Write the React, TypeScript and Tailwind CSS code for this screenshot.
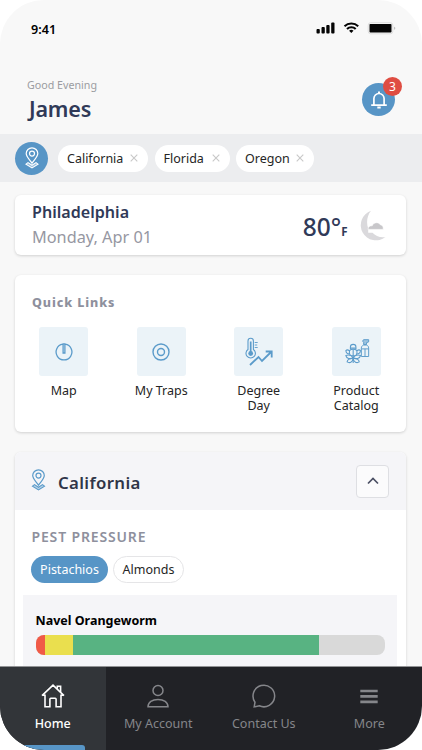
import type { ReactNode } from "react";

const locations = [
  { name: "California", width: "w-[90px]" },
  { name: "Florida", width: "w-[75px]" },
  { name: "Oregon", width: "w-[78px]" },
];

const pressure = [
  { color: "bg-[#f05a47]", value: 2.7 },
  { color: "bg-[#eadf4e]", value: 8.0 },
  { color: "bg-[#58b382]", value: 70.3 },
];

function PinIcon({ className }: { className: string }) {
  return (
    <svg viewBox="0 0 14 22" fill="none" stroke="currentColor" strokeWidth="1.200" className={className}>
      <path d="M7 16.2C4.600 12.600 1.200 9.700 1.200 6.600a5.800 5.800 0 0 1 11.600 0c0 3.100-3.400 6-5.800 9.600Z" />
      <circle cx="7" cy="6.600" r="2.500" />
      <path d="M3 15.600 1 17.100 7 20.900l6-3.800-2-1.500-4 2.700Z" fill="currentColor" fillOpacity=".4" strokeWidth="1.100" />
    </svg>
  );
}

function BellIcon() {
  return (
    <svg viewBox="0 0 18 18" fill="none" stroke="currentColor" strokeWidth="1.700" className="size-[18px]">
      <path d="M1.200 14.200h15.600M3.900 14V7.600a5.100 5.100 0 0 1 10.200 0V14" />
      <path d="M9 .5v2.300M7.300 16.500h3.400" strokeWidth="2" />
    </svg>
  );
}

function StatusIcons() {
  return (
    <svg viewBox="0 0 82 14" className="h-[14px] w-[82px]">
      <g fill="#050505">
        <rect x="0.500" y="8" width="3.300" height="4.500" rx="0.900" />
        <rect x="5.500" y="6" width="3.300" height="6.500" rx="0.900" />
        <rect x="10.300" y="4" width="3.300" height="8.500" rx="0.900" />
        <rect x="15.200" y="1.500" width="3.300" height="11" rx="0.900" />
        <rect x="53.500" y="3" width="22" height="8.500" rx="0.800" />
        <path d="m35.300 12-2.200-2.200a3.300 3.300 0 0 1 4.400 0Z" />
      </g>
      <g fill="none" stroke="#050505" strokeWidth="2.100">
        <path d="M28.500 5.200a10 10 0 0 1 13.700 0M31 8a6.200 6.200 0 0 1 8.700 0" />
      </g>
      <rect x="52.200" y="1.700" width="24.600" height="11.100" rx="2.500" fill="none" stroke="#dedede" />
      <path d="M78.300 5.700v3.100c1.300-.5 1.300-2.600 0-3.100" fill="#aaa" />
    </svg>
  );
}

function MoonIcon() {
  return (
    <svg viewBox="0 0 27 31" className="h-[31px] w-[27px]">
      <path d="M11 .8A15.200 15.200 0 1 0 25.500 27c-5.500.8-10-1-13-4.300H8.200v-4.200C6.200 13 6.800 6 11 .8Z" fill="#dad9dc" />
      <path
        d="M8 19.400c0-2.600 2-4 4.200-3.600 1.300-3.700 6.400-4.200 8.200-1 2 .2 3.200 2 2.800 4.600Z"
        fill="#c8c7ca"
        stroke="#fff"
        strokeWidth=".6"
      />
    </svg>
  );
}

function MapIcon() {
  return (
    <svg viewBox="0 0 18 18" fill="none" stroke="currentColor" strokeWidth="1.300" className="size-[18px]">
      <path d="M7.800 1.200a7.900 7.900 0 1 0 2.400 0M8.100 10V.8h1.800V10Z" />
    </svg>
  );
}

function TrapIcon() {
  return (
    <svg viewBox="0 0 18 18" fill="none" stroke="currentColor" strokeWidth="1.400" className="size-[18px]">
      <circle cx="9" cy="9" r="8" />
      <circle cx="9" cy="9" r="3.500" />
    </svg>
  );
}

function DegreeIcon() {
  return (
    <svg viewBox="0 0 28 29" fill="none" stroke="currentColor" className="h-[29px] w-[28px]">
      <path d="M3 12.500V4a2.700 2.700 0 0 1 5.400 0v8.500a4.700 4.700 0 1 1-5.400 0Z" strokeWidth="1.100" />
      <path d="M5.700 4.500v11" strokeWidth="1.700" />
      <circle cx="5.700" cy="16.500" r="2.400" fill="currentColor" stroke="none" />
      <path d="M9.700 5.500h3M9.700 8h2.500M9.700 10.500h3" strokeWidth=".9" />
      <path d="m5 28 8.500-8 3.500 4 9.600-9.500M20.700 14.500h6v6" strokeWidth="1.800" />
    </svg>
  );
}

function ProductIcon() {
  return (
    <svg viewBox="0 0 26 26" fill="none" stroke="currentColor" strokeWidth="1.100" className="ml-[2px] size-[25px]">
      <path d="M5.600 11V8.500a2.900 2.900 0 0 1 5.800 0V11M5.600 9.500h5.800M8.500 11v14" />
      <path d="M8.500 17.500c-2.800.3-4.700-1.400-3.800-5.500 2-1.700 5.600-1.700 7.600 0 .9 4.100-1 5.800-3.800 5.500Z" />
      <path d="M4.700 12.300C3.200 11.100 1.700 11.200.9 12c.1 2.200 1.600 3.600 4 3.600M12.300 12.300c1.500-1.200 3-1.100 3.800-.3-.1 2.200-1.600 3.600-4 3.600" />
      <path d="M8.500 19.500c-2-2.600-5.200-3.200-7.600-2.300.6 3 4.500 4.200 7.600 2.300ZM8.500 19.500c2-2.600 5.200-3.200 7.600-2.300-.6 3-4.500 4.200-7.600 2.300Z" />
      <path d="M8.500 20.500c-3.400-.8-6 .8-6.300 3.300 2.700 1.800 5.700.2 6.300-3.300ZM8.500 20.500c3.400-.8 6 .8 6.300 3.300-2.700 1.800-5.700.2-6.300-3.300Z" />
      <path d="M17 18.200V9.500c0-1.600 1-2.700 2.200-3.200h3.200c1.400.5 2.200 1.600 2.200 3.200v8.700ZM17 10.300h7.600M20.800 10.300v7.900" strokeWidth="1" />
      <path d="M19.400 5.700V3.400L18.300 2.200l1-1.500h5.300V3l-2.200.8v1.900Z" fill="currentColor" fillOpacity=".55" strokeWidth="1" />
    </svg>
  );
}

function HomeIcon() {
  return (
    <svg viewBox="0 0 24 24" fill="none" stroke="currentColor" strokeWidth="1.600" className="size-6">
      <path d="M1 11.600 12 1.200l11 10.400M1 11.300h3v11.500h4.900v-7.600c0-.6.300-.9.900-.9h4.400c.6 0 .9.300.9.900v7.600H20V11.300h3" />
      <path d="M16.300 4.800V2.200h3.300v5.900" />
    </svg>
  );
}

function UserIcon() {
  return (
    <svg viewBox="0 0 24 24" fill="none" stroke="currentColor" strokeWidth="1.500" className="size-6">
      <circle cx="12" cy="6.500" r="5" />
      <path d="M2 22.800c0-4.600 4.200-7.400 10-7.400s10 2.800 10 7.400Z" />
    </svg>
  );
}

function ChatIcon() {
  return (
    <svg viewBox="0 0 24 24" fill="none" stroke="currentColor" strokeWidth="1.500" className="size-6">
      <path d="M2.200 22.900 3 18.200a10.800 10.800 0 1 1 4.300 3.600Z" />
    </svg>
  );
}

function MenuIcon() {
  return (
    <svg viewBox="0 0 24 24" fill="none" stroke="currentColor" strokeWidth="2.700" className="size-6">
      <path d="M3.300 7h17.400M3.300 12.400h17.400M3.300 17.800h17.400" />
    </svg>
  );
}

function QuickLink({ icon, label }: { icon: ReactNode; label: ReactNode }) {
  return (
    <div className="flex flex-col items-center">
      <div className="flex size-[49px] items-center justify-center rounded-[3px] bg-[#ebf3f8] text-[#5b9bca]">
        {icon}
      </div>
      <p className="mt-[8px] text-center text-[12.500px] leading-[14.600px] text-[#252525]">{label}</p>
    </div>
  );
}

function NavItem({ icon, label, active = false }: { icon: ReactNode; label: string; active?: boolean }) {
  return (
    <div
      className={
        active
          ? "relative flex flex-col items-center bg-[#323539] pt-[17px] font-medium text-white"
          : "relative flex flex-col items-center pt-[17px] text-[#85868a]"
      }
    >
      {icon}
      <span className="mt-[7px] text-[12.500px] leading-[18px]">{label}</span>
      {active && <div className="absolute bottom-0 left-[21px] h-[5px] w-[64px] rounded-t-[3px] bg-[#5795c6]" />}
    </div>
  );
}

export default function App() {
  return (
    <div className="h-[750px] w-[422px] bg-white font-['Noto_Sans',sans-serif]">
      <div className="flex h-full flex-col overflow-hidden rounded-[44px] bg-[#f8f8f8]">
        <header className="h-[134px] shrink-0">
          <div className="flex h-[60px] items-center justify-between pr-[24px] pl-[31px]">
            <span className="pt-px text-[12.600px] font-semibold text-black">9:41</span>
            <div className="-mt-[5px]">
              <StatusIcons />
            </div>
          </div>
          <div className="flex justify-between pr-[27px] pl-[27px]">
            <div className="pt-[17px]">
              <p className="text-[10.700px] leading-[16px] text-[#9b9ca1]">Good Evening</p>
              <h1 className="mt-[2px] pl-[2px] text-[21.500px] leading-[28px] font-semibold tracking-[-0.2px] text-[#303a58]">
                James
              </h1>
            </div>
            <div className="relative mt-[23px] flex size-[33px] items-center justify-center rounded-full bg-[#5795c6] text-white">
              <BellIcon />
              <span className="absolute -top-[6px] -right-[7px] flex size-[19px] items-center justify-center rounded-full bg-[#df4d42] text-[12px]">
                3
              </span>
            </div>
          </div>
        </header>

        <div className="flex h-[48px] shrink-0 items-center gap-[6.500px] bg-[#ecedef] pl-[15px]">
          <div className="mr-[3.500px] flex size-[33px] items-center justify-center rounded-full bg-[#5795c6] text-white">
            <PinIcon className="h-[22px] w-[14px]" />
          </div>
          {locations.map((location) => (
            <div
              key={location.name}
              className={`flex h-[27px] items-center justify-between rounded-full bg-white pr-[10px] pl-[9px] text-[12.500px] text-[#252525] ${location.width}`}
            >
              <span className="pt-[2px]">{location.name}</span>
              <svg viewBox="0 0 8 8" stroke="#c8c8c8" strokeWidth="1.100" className="size-[8px]">
                <path d="m.7.7 6.600 6.600m0-6.600L.7 7.300" />
              </svg>
            </div>
          ))}
        </div>

        <main className="min-h-0 flex-1 overflow-hidden pt-[13px] pr-[16.500px] pl-[14.500px]">
          <section className="flex h-[60px] items-center justify-between rounded-[6px] bg-white pr-[19px] pl-[17.500px] shadow-[0_1px_3px_rgba(0,0,0,0.16)]">
            <div>
              <h2 className="text-[16.100px] leading-[24px] font-semibold text-[#303a58]">Philadelphia</h2>
              <p className="text-[16.300px] leading-[26px] text-[#9697a2]">Monday, Apr 01</p>
            </div>
            <div className="flex items-center">
              <p className="pt-[8px] text-[24.500px] leading-[30px] font-medium text-[#303a58]">
                80°<span className="text-[11.500px] font-bold">F</span>
              </p>
              <div className="ml-[12px]">
                <MoonIcon />
              </div>
            </div>
          </section>

          <section className="mt-[20px] h-[157px] rounded-[6px] bg-white shadow-[0_1px_3px_rgba(0,0,0,0.16)]">
            <h2 className="pt-[19px] pl-[17.500px] text-[12.500px] leading-[18px] font-extrabold tracking-[0.9px] text-[#8e909d]">
              Quick Links
            </h2>
            <div className="mt-[15px] mr-[0.500px] ml-[0.500px] grid grid-cols-4">
              <QuickLink icon={<MapIcon />} label="Map" />
              <QuickLink icon={<TrapIcon />} label="My Traps" />
              <QuickLink icon={<DegreeIcon />} label={<>Degree<br />Day</>} />
              <QuickLink icon={<ProductIcon />} label={<>Product<br />Catalog</>} />
            </div>
          </section>

          <section className="mt-[20px] h-[240px] overflow-hidden rounded-t-[6px] bg-white shadow-[0_1px_3px_rgba(0,0,0,0.16)]">
            <div className="flex h-[58px] items-center bg-[#f5f5f8] pr-[16.500px] pl-[16.500px]">
              <PinIcon className="-mt-[2px] h-[22px] w-[15px] text-[#5b9bca]" />
              <h2 className="ml-[12px] flex-1 pt-[4px] text-[16.800px] font-semibold tracking-[0.35px] text-[#303548]">
                California
              </h2>
              <div className="flex size-[33px] items-center justify-center rounded-[4px] border border-[#dedfe3] bg-[#fbfbfc]">
                <svg viewBox="0 0 12 8" fill="none" stroke="#4b5064" strokeWidth="1.700" className="h-[8px] w-[12px]">
                  <path d="m1 6.500 5-5 5 5" />
                </svg>
              </div>
            </div>
            <div className="pt-[17px]">
              <h3 className="pl-[17px] text-[14px] leading-[20px] font-semibold tracking-[0.850px] text-[#8e909d]">
                PEST PRESSURE
              </h3>
              <div className="mt-[9px] flex gap-[5px] pl-[16.500px] text-[12.500px]">
                <div className="flex h-[27px] w-[77px] items-center justify-center rounded-full bg-[#5795c6] pt-px text-white">
                  Pistachios
                </div>
                <div className="flex h-[27px] w-[71px] items-center justify-center rounded-full border border-[#e5e5e7] pt-px text-[#252525]">
                  Almonds
                </div>
              </div>
              <div className="mt-[12px] mr-[8.500px] ml-[8.500px] h-[90px] bg-[#f5f5f8] pt-[17px] pr-[12px] pl-[12.500px]">
                <h4 className="text-[12.500px] leading-[18px] font-bold text-black">Navel Orangeworm</h4>
                <div className="mt-[5px] flex h-[20px] overflow-hidden rounded-[8px] bg-[#d9d9d9]">
                  {pressure.map((level) => (
                    <div key={level.color} className={level.color} style={{ width: `${level.value}%` }} />
                  ))}
                </div>
              </div>
            </div>
          </section>
        </main>

        <nav className="grid h-[84px] shrink-0 grid-cols-4 border-t border-[#929395] bg-[#212226]">
          <NavItem icon={<HomeIcon />} label="Home" active />
          <NavItem icon={<UserIcon />} label="My Account" />
          <NavItem icon={<ChatIcon />} label="Contact Us" />
          <NavItem icon={<MenuIcon />} label="More" />
        </nav>
      </div>
    </div>
  );
}
